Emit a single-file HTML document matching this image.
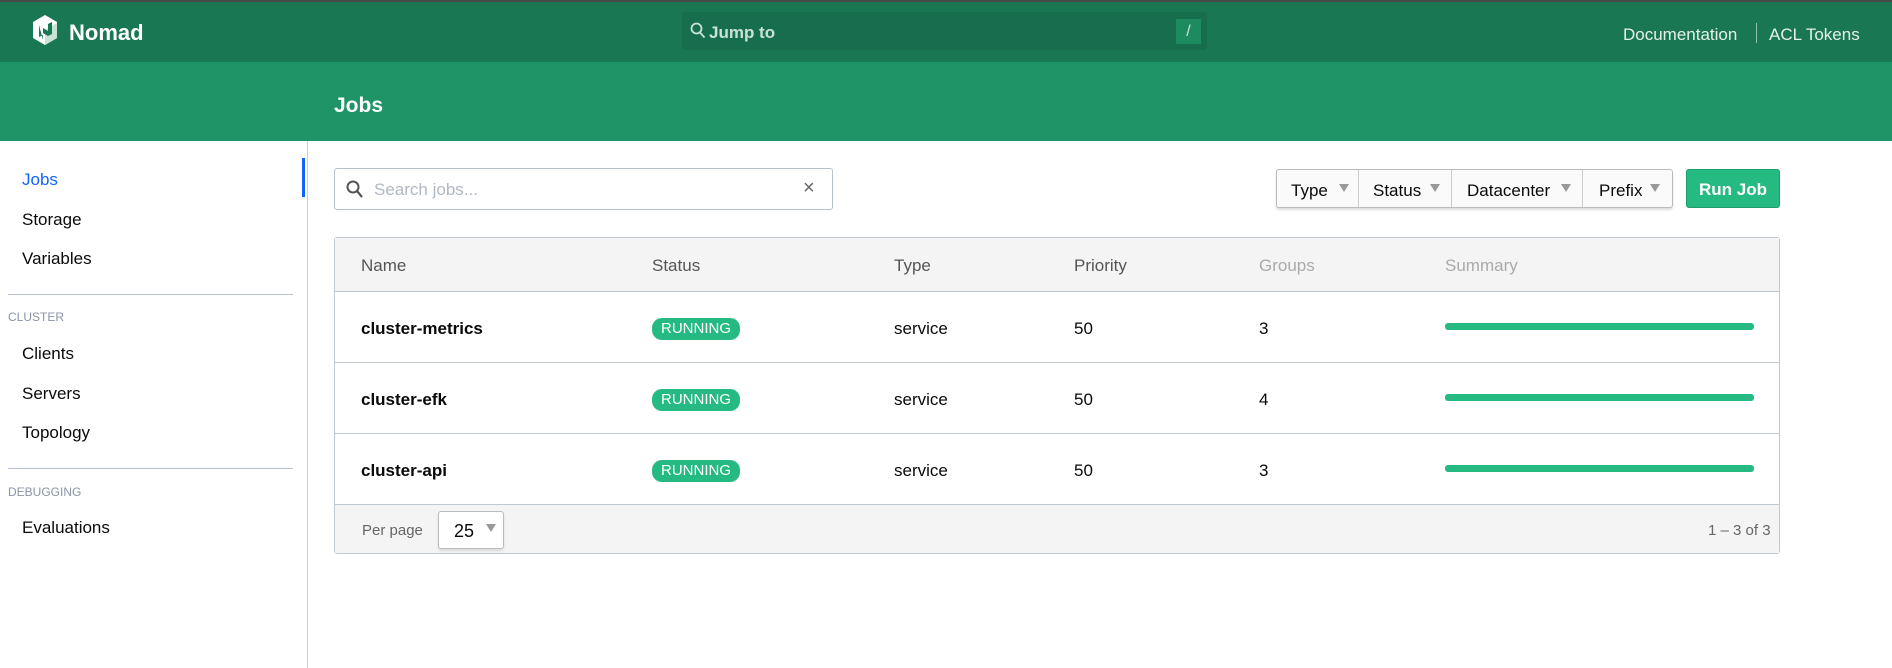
<!DOCTYPE html>
<html><head><meta charset="utf-8"><style>
*{box-sizing:border-box;margin:0;padding:0}
body{width:1892px;height:668px;overflow:hidden;background:#fff;font-family:"Liberation Sans",sans-serif;color:#0a0a0a;position:relative}
.a{position:absolute}
.top{left:0;top:0;width:1892px;height:62px;background:#1a7753;border-top:2px solid #4a4a4a}
.sub{left:0;top:62px;width:1892px;height:79px;background:#1e9467}
.side{left:307px;top:141px;width:1px;height:527px;background:#c8d0dc}
.nav{font-size:17px;color:#0a0a0a}
.lbl{font-size:12px;color:#8a94a6}
.hr{height:1px;background:#b8c2d0}
.th{font-size:17px;color:#555}
.td{font-size:17px;color:#0a0a0a}
.badge{background:#25ba81;color:#fff;font-size:15px;border-radius:10px;width:88px;height:22px;line-height:22px;text-align:center}
.bar{left:1445px;width:309px;height:7px;border-radius:3px;background:#25ba81}
.rowline{left:334px;width:1446px;height:1px;background:#c0c8d4}
.tri{width:0;height:0;border-left:5px solid transparent;border-right:5px solid transparent;border-top:8px solid #999}
</style></head><body>
<div class="a top"></div>
<svg class="a" style="left:32px;top:14px" width="26" height="32" viewBox="0 0 26 32"><polygon points="13,1 25,8 25,24 13,31 1,24 1,8" fill="#fff"/><polygon points="13,16 25,9 25,24 13,31" fill="#c9e2d8"/><path d="M7 11v12l4-2v-7l5 3v-7l4-2v12l-4 2-5-3v7z" fill="#1a7753"/></svg>
<div class="a" style="left:69px;top:20px;font-size:22px;font-weight:bold;color:#fff">Nomad</div>
<div class="a" style="left:682px;top:12px;width:525px;height:38px;background:#176e4e;border-radius:3px"></div>
<svg class="a" style="left:690px;top:22px" width="16" height="17" viewBox="0 0 16 17"><circle cx="6.5" cy="6.5" r="5" fill="none" stroke="#c9e2d8" stroke-width="1.8"/><line x1="10" y1="10.5" x2="14.5" y2="15.5" stroke="#c9e2d8" stroke-width="1.8"/></svg>
<div class="a" style="left:709px;top:23px;font-size:17px;font-weight:bold;color:#c9e2d8">Jump to</div>
<div class="a" style="left:1176px;top:19px;width:25px;height:25px;background:#1e8a60;color:#c9e2d8;font-size:16px;text-align:center;line-height:25px">/</div>
<div class="a" style="left:1623px;top:25px;font-size:17px;color:#e4f1ea">Documentation</div>
<div class="a" style="left:1756px;top:23px;width:1px;height:20px;background:#8fc4ad"></div>
<div class="a" style="left:1769px;top:25px;font-size:17px;color:#e4f1ea">ACL Tokens</div>
<div class="a sub"></div>
<div class="a" style="left:334px;top:94px;font-size:21px;font-weight:bold;color:#fff">Jobs</div>
<div class="a side"></div>
<div class="a nav" style="left:22px;top:170px;color:#1563ff">Jobs</div>
<div class="a" style="left:302px;top:158px;width:3px;height:39px;background:#1563ff"></div>
<div class="a nav" style="left:22px;top:210px">Storage</div>
<div class="a nav" style="left:22px;top:249px">Variables</div>
<div class="a hr" style="left:8px;top:294px;width:285px"></div>
<div class="a lbl" style="left:8px;top:310px">CLUSTER</div>
<div class="a nav" style="left:22px;top:344px">Clients</div>
<div class="a nav" style="left:22px;top:384px">Servers</div>
<div class="a nav" style="left:22px;top:423px">Topology</div>
<div class="a hr" style="left:8px;top:468px;width:285px"></div>
<div class="a lbl" style="left:8px;top:485px">DEBUGGING</div>
<div class="a nav" style="left:22px;top:518px">Evaluations</div>

<div class="a" style="left:334px;top:168px;width:499px;height:42px;border:1px solid #b8c0cc;border-radius:3px"></div>
<svg class="a" style="left:346px;top:180px" width="18" height="19" viewBox="0 0 18 19"><circle cx="7" cy="7" r="5.5" fill="none" stroke="#555" stroke-width="2"/><line x1="11" y1="11" x2="16" y2="17" stroke="#555" stroke-width="2.2"/></svg>
<div class="a" style="left:374px;top:180px;font-size:17px;color:#b0b8c4">Search jobs...</div>
<div class="a" style="left:803px;top:177px;font-size:20px;color:#666">×</div>

<div class="a" style="left:1276px;top:169px;width:397px;height:39px;border:1px solid #bbb;border-radius:3px;background:#fafafa;box-shadow:0 2px 2px #ddd"></div>
<div class="a" style="left:1358px;top:170px;width:1px;height:37px;background:#ccc"></div>
<div class="a" style="left:1451px;top:170px;width:1px;height:37px;background:#ccc"></div>
<div class="a" style="left:1582px;top:170px;width:1px;height:37px;background:#ccc"></div>
<div class="a td" style="left:1291px;top:181px">Type</div><div class="a tri" style="left:1339px;top:184px"></div>
<div class="a td" style="left:1373px;top:181px">Status</div><div class="a tri" style="left:1430px;top:184px"></div>
<div class="a td" style="left:1467px;top:181px">Datacenter</div><div class="a tri" style="left:1561px;top:184px"></div>
<div class="a td" style="left:1599px;top:181px">Prefix</div><div class="a tri" style="left:1650px;top:184px"></div>
<div class="a" style="left:1686px;top:169px;width:94px;height:39px;background:#25ba81;border-radius:3px;border:1px solid #1f9e6d;color:#fff;font-size:17px;font-weight:bold;text-align:center;line-height:39px">Run Job</div>

<div class="a" style="left:334px;top:237px;width:1446px;height:317px;border:1px solid #c0c8d4;border-radius:3px"></div>
<div class="a" style="left:335px;top:238px;width:1444px;height:53px;background:#f4f4f4"></div>
<div class="a rowline" style="top:291px"></div>
<div class="a rowline" style="top:362px"></div>
<div class="a rowline" style="top:433px"></div>
<div class="a rowline" style="top:504px"></div>
<div class="a" style="left:335px;top:505px;width:1444px;height:48px;background:#f4f4f4"></div>
<div class="a th" style="left:361px;top:256px">Name</div>
<div class="a th" style="left:652px;top:256px">Status</div>
<div class="a th" style="left:894px;top:256px">Type</div>
<div class="a th" style="left:1074px;top:256px">Priority</div>
<div class="a th" style="left:1259px;top:256px;color:#aaa">Groups</div>
<div class="a th" style="left:1445px;top:256px;color:#aaa">Summary</div>

<div class="a td" style="left:361px;top:319px;font-weight:bold">cluster-metrics</div>
<div class="a badge" style="left:652px;top:318px">RUNNING</div>
<div class="a td" style="left:894px;top:319px">service</div>
<div class="a td" style="left:1074px;top:319px">50</div>
<div class="a td" style="left:1259px;top:319px">3</div>
<div class="a bar" style="top:323px"></div>

<div class="a td" style="left:361px;top:390px;font-weight:bold">cluster-efk</div>
<div class="a badge" style="left:652px;top:389px">RUNNING</div>
<div class="a td" style="left:894px;top:390px">service</div>
<div class="a td" style="left:1074px;top:390px">50</div>
<div class="a td" style="left:1259px;top:390px">4</div>
<div class="a bar" style="top:394px"></div>

<div class="a td" style="left:361px;top:461px;font-weight:bold">cluster-api</div>
<div class="a badge" style="left:652px;top:460px">RUNNING</div>
<div class="a td" style="left:894px;top:461px">service</div>
<div class="a td" style="left:1074px;top:461px">50</div>
<div class="a td" style="left:1259px;top:461px">3</div>
<div class="a bar" style="top:465px"></div>

<div class="a" style="left:362px;top:522px;font-size:15px;color:#666">Per page</div>
<div class="a" style="left:438px;top:511px;width:66px;height:38px;border:1px solid #bbb;border-radius:3px;background:#fff;box-shadow:0 2px 2px #ddd"></div>
<div class="a td" style="left:454px;top:521px;font-size:18px">25</div>
<div class="a tri" style="left:486px;top:524px"></div>
<div class="a" style="left:1708px;top:522px;font-size:15px;color:#666">1 – 3 of 3</div>
</body></html>
